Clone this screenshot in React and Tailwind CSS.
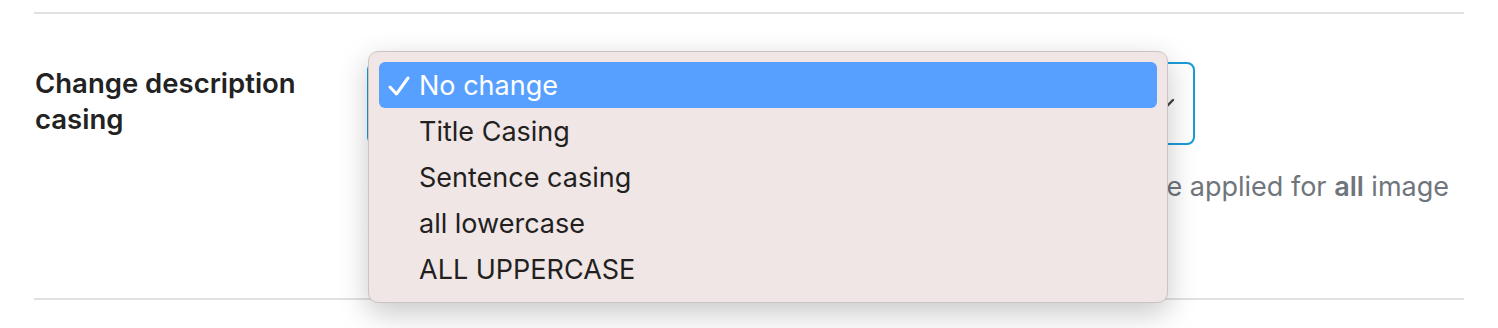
import React from 'react';

const options = ['No change', 'Title Casing', 'Sentence casing', 'all lowercase', 'ALL UPPERCASE'];

function CasingMenu({ selected = 'No change' }) {
  return (
    <div className="absolute left-[368px] top-[51px] w-[800px] rounded-[10px] border border-[#cbc3c3] bg-[#efe6e5] px-[10px] pt-[10px] pb-[10px] shadow-[0_10px_30px_rgba(0,0,0,0.22)]">
      {options.map((opt) => {
        const active = opt === selected;
        return (
          <div
            key={opt}
            className={
              active
                ? 'flex h-[46px] items-center rounded-md bg-[#58a0ff] pt-[2px] text-white'
                : 'flex h-[46px] items-center pt-[2px] text-[#231f1f]'
            }
          >
            <span className="flex w-[40px] pl-[9px]">
              {active && (
                <svg width="22" height="20" viewBox="0 0 22 20" fill="none" stroke="white" strokeWidth="3" strokeLinecap="round" strokeLinejoin="round">
                  <path d="M2 11l6.5 7L20 2" />
                </svg>
              )}
            </span>
            <span className="text-[27px]">{opt}</span>
          </div>
        );
      })}
    </div>
  );
}

export default function App() {
  return (
    <div className="relative h-[328px] w-[1498px] overflow-hidden bg-white font-['Inter',sans-serif]">
      <div className="mx-[34px] mt-[12px] flex h-[288px] border-y-2 border-[#dfe1e4]">
        <div className="w-[333px] pl-px pt-[51px]">
          <h3 className="w-[300px] text-[27.5px] leading-[36px] font-semibold text-[#222]">
            Change description casing
          </h3>
        </div>
        <div className="flex-1 pt-[48px]">
          <div className="flex h-[83px] w-[828px] items-center justify-between rounded-lg border-[2.5px] border-[#1b9ad8] pl-4 pr-[18px]">
            <span className="text-[27px] text-[#222]">No change</span>
            <svg width="18" height="12" viewBox="0 0 18 12" fill="none" stroke="#444" strokeWidth="2.4" strokeLinecap="round">
              <path d="M2 2l7 7 7-7" />
            </svg>
          </div>
          <p className="mt-[24px] text-[27px] leading-[36px] text-[#70757b]">
            Choose how descriptions are cased. The selected option will be applied for <b className="font-semibold">all</b> image descriptions.
          </p>
        </div>
      </div>
      <CasingMenu />
    </div>
  );
}
